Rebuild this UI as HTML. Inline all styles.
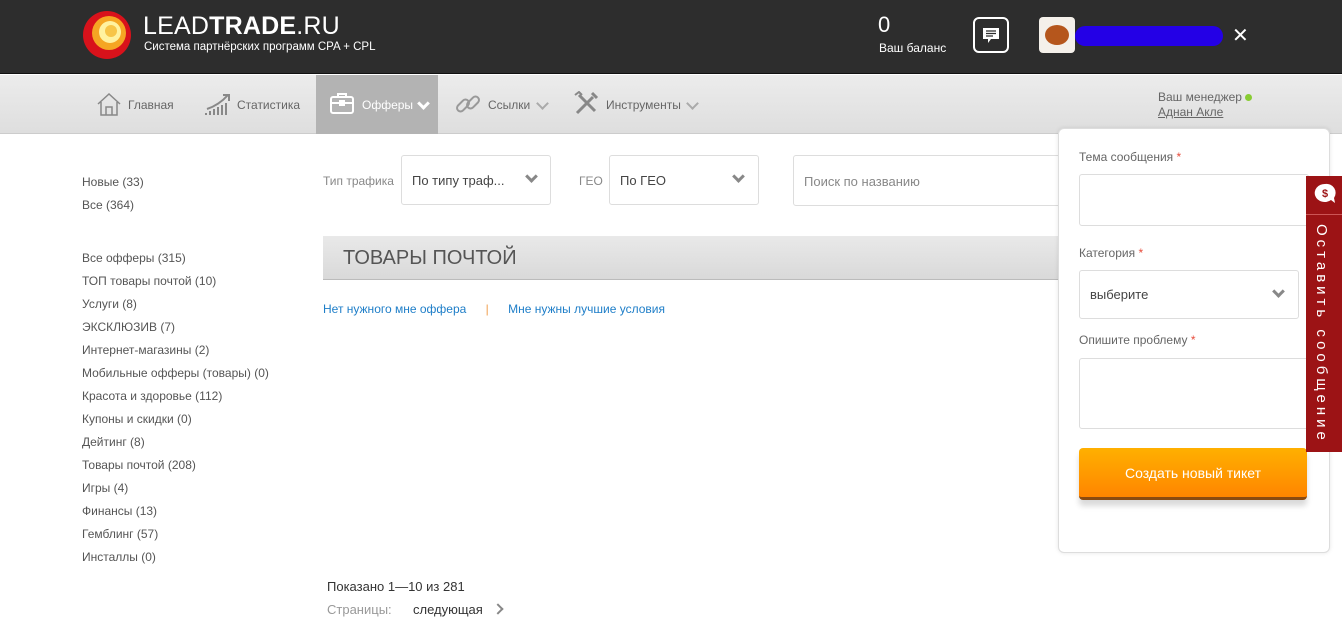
<!DOCTYPE html>
<html><head><meta charset="utf-8"><style>
*{margin:0;padding:0;box-sizing:border-box}
body{width:1342px;height:630px;overflow:hidden;background:#fff;font-family:"Liberation Sans",sans-serif;position:relative;color:#555}
.a{position:absolute;white-space:nowrap}
#hdr{position:absolute;left:0;top:0;width:1342px;height:74px;background:#2d2d2d;border-bottom:1px solid #111}
#nav{position:absolute;left:0;top:75px;width:1342px;height:59px;background:linear-gradient(#ececec,#dedede);border-bottom:1px solid #ccc}
.ni{font-size:12px;color:#666;top:98px}
.side{font-size:12px;color:#555;left:82px}
.box{position:absolute;border:1px solid #ddd;border-radius:3px;background:#fff}
.chev{position:absolute;width:9px;height:9px;border-right:3px solid #888;border-bottom:3px solid #888;transform:rotate(45deg)}
.lbl{font-size:12px;color:#666}
.req{color:#e74c3c}
</style></head><body>
<div id="hdr"></div>
<svg class="a" style="left:82px;top:10px" width="50" height="50" viewBox="0 0 50 50">
<circle cx="25" cy="25" r="24" fill="#d8121b"/><circle cx="27" cy="23" r="17" fill="#f5a623"/><circle cx="28" cy="22" r="11" fill="#fff2a0"/><circle cx="29" cy="21" r="6" fill="#f7c548"/></svg>
<div class="a" style="left:143px;top:12px;font-size:25px;color:#fff;letter-spacing:0.2px">LEAD<b>TRADE</b>.RU</div>
<div class="a" style="left:144px;top:41px;font-size:11.5px;color:#fff">Система партнёрских программ CPA + CPL</div>
<div class="a" style="left:878px;top:12px;font-size:22px;color:#fff">0</div>
<div class="a" style="left:879px;top:41px;font-size:12px;color:#fff">Ваш баланс</div>
<div class="a" style="left:973px;top:17px;width:36px;height:36px;border:2px solid #fff;border-radius:6px"></div>
<svg class="a" style="left:982px;top:27px" width="18" height="17" viewBox="0 0 18 17"><path d="M1 1h16v11H9l-3 4v-4H1z" fill="#fff"/><path d="M4 4h10M4 6.5h10M4 9h7" stroke="#2d2d2d" stroke-width="1.3"/></svg>
<div class="a" style="left:1039px;top:17px;width:36px;height:36px;background:#f4f0ea;border-radius:4px;overflow:hidden"><div style="position:absolute;left:6px;top:8px;width:24px;height:20px;background:#b5561c;border-radius:50%"></div></div>
<div class="a" style="left:1075px;top:26px;width:148px;height:20px;background:#2400e6;border-radius:10px"></div>
<div class="a" style="left:1232px;top:23px;font-size:20px;color:#fff">✕</div>

<div id="nav"></div>
<div class="a" style="left:316px;top:75px;width:122px;height:59px;background:#b3b3b3"></div>
<svg class="a" style="left:96px;top:91px" width="26" height="26" viewBox="0 0 26 26" fill="none" stroke="#888" stroke-width="1.5"><path d="M2 13L13 3l11 10M5 11v13h16V11M10 24v-8h6v8"/></svg>
<div class="a ni" style="left:128px">Главная</div>
<svg class="a" style="left:204px;top:91px" width="28" height="26" viewBox="0 0 28 26" stroke="#888" stroke-width="2" fill="none"><path d="M2 24v-2M6 24v-4M10 24v-6M14 24v-8M18 24v-10M22 24v-12M3 18Q15 14 24 4"/><path d="M19 4h6v6" /></svg>
<div class="a ni" style="left:237px">Статистика</div>
<svg class="a" style="left:330px;top:92px" width="24" height="22" viewBox="0 0 24 22" fill="none" stroke="#fff" stroke-width="2"><rect x="1" y="5" width="22" height="16" rx="2"/><path d="M8 5V2h8v3M1 11h22"/><rect x="10" y="9" width="4" height="4" fill="#fff"/></svg>
<div class="a ni" style="left:362px;color:#fff">Офферы</div>
<div class="chev" style="left:419px;top:99px;border-color:#fff"></div>
<svg class="a" style="left:455px;top:91px" width="26" height="26" viewBox="0 0 26 26" fill="none" stroke="#999" stroke-width="2"><rect x="1" y="11" width="14" height="7" rx="3.5" transform="rotate(-45 8 14.5)"/><rect x="11" y="8" width="14" height="7" rx="3.5" transform="rotate(-45 18 11.5)"/></svg>
<div class="a ni" style="left:488px">Ссылки</div>
<div class="chev" style="left:538px;top:99px;border-color:#aaa;border-width:2px"></div>
<svg class="a" style="left:573px;top:91px" width="26" height="26" viewBox="0 0 26 26" stroke="#888" stroke-width="3" fill="none"><path d="M4 22L20 6M6 4l16 16"/><path d="M2 4l4-3 3 3" stroke-width="2"/><path d="M19 2l5 5" /></svg>
<div class="a ni" style="left:606px">Инструменты</div>
<div class="chev" style="left:688px;top:99px;border-color:#aaa;border-width:2px"></div>
<div class="a" style="left:1158px;top:90px;font-size:12px;color:#666">Ваш менеджер <span style="display:inline-block;width:7px;height:7px;border-radius:50%;background:#8c3"></span></div>
<div class="a" style="left:1158px;top:105px;font-size:12px;color:#666;text-decoration:underline">Аднан Акле</div>

<div class="a side" style="top:175px">Новые (33)</div>
<div class="a side" style="top:198px">Все (364)</div>
<div class="a side" style="top:251px">Все офферы (315)</div>
<div class="a side" style="top:274px">ТОП товары почтой (10)</div>
<div class="a side" style="top:297px">Услуги (8)</div>
<div class="a side" style="top:320px">ЭКСКЛЮЗИВ (7)</div>
<div class="a side" style="top:343px">Интернет-магазины (2)</div>
<div class="a side" style="top:366px">Мобильные офферы (товары) (0)</div>
<div class="a side" style="top:389px">Красота и здоровье (112)</div>
<div class="a side" style="top:412px">Купоны и скидки (0)</div>
<div class="a side" style="top:435px">Дейтинг (8)</div>
<div class="a side" style="top:458px">Товары почтой (208)</div>
<div class="a side" style="top:481px">Игры (4)</div>
<div class="a side" style="top:504px">Финансы (13)</div>
<div class="a side" style="top:527px">Гемблинг (57)</div>
<div class="a side" style="top:550px">Инсталлы (0)</div>

<div class="a" style="left:323px;top:174px;font-size:12px;color:#888">Тип трафика</div>
<div class="box" style="left:401px;top:155px;width:150px;height:50px"></div>
<div class="a" style="left:412px;top:173px;font-size:13px;color:#444">По типу траф...</div>
<div class="chev" style="left:527px;top:172px"></div>
<div class="a" style="left:579px;top:174px;font-size:12px;color:#888">ГЕО</div>
<div class="box" style="left:609px;top:155px;width:150px;height:50px"></div>
<div class="a" style="left:620px;top:173px;font-size:13px;color:#444">По ГЕО</div>
<div class="chev" style="left:734px;top:172px"></div>
<div class="box" style="left:793px;top:155px;width:280px;height:51px"></div>
<div class="a" style="left:804px;top:174px;font-size:13px;color:#888">Поиск по названию</div>
<div class="a" style="left:323px;top:236px;width:740px;height:44px;background:linear-gradient(#e9e9e9,#d9d9d9);border-bottom:1px solid #bbb"></div>
<div class="a" style="left:343px;top:247px;font-size:20px;color:#555">ТОВАРЫ ПОЧТОЙ</div>
<div class="a" style="left:323px;top:302px;font-size:12px;color:#1e7ec8">Нет нужного мне оффера <span style="color:#f0a050;margin:0 16px">|</span> Мне нужны лучшие условия</div>
<div class="a" style="left:327px;top:579px;font-size:13px;color:#333">Показано 1—10 из 281</div>
<div class="a" style="left:327px;top:602px;font-size:13px;color:#999">Страницы:</div>
<div class="a" style="left:413px;top:602px;font-size:13px;color:#333">следующая</div>
<div class="chev" style="left:494px;top:605px;transform:rotate(-45deg);width:8px;height:8px;border-width:2px"></div>

<div class="a" style="left:1058px;top:128px;width:272px;height:425px;background:#fff;border:1px solid #ddd;border-radius:6px;box-shadow:0 0 4px rgba(0,0,0,.1)"></div>
<div class="a lbl" style="left:1079px;top:150px">Тема сообщения <span class="req">*</span></div>
<div class="box" style="left:1079px;top:174px;width:230px;height:52px"></div>
<div class="a lbl" style="left:1079px;top:246px">Категория <span class="req">*</span></div>
<div class="box" style="left:1079px;top:270px;width:220px;height:49px"></div>
<div class="a" style="left:1090px;top:287px;font-size:13px;color:#444">выберите</div>
<div class="chev" style="left:1274px;top:287px"></div>
<div class="a lbl" style="left:1079px;top:333px">Опишите проблему <span class="req">*</span></div>
<div class="box" style="left:1079px;top:358px;width:230px;height:71px"></div>
<div class="a" style="left:1079px;top:448px;width:228px;height:52px;background:linear-gradient(#ffb000,#ff8500);border-radius:4px;border-bottom:3px solid #8a4a10;box-shadow:0 6px 6px rgba(0,0,0,.15);color:#fff;font-size:14px;text-align:center;line-height:50px">Создать новый тикет</div>
<div class="a" style="left:1306px;top:176px;width:36px;height:276px;background:#9c1315"></div>
<div class="a" style="left:1306px;top:214px;width:36px;height:1px;background:#c55"></div>
<svg class="a" style="left:1313px;top:182px" width="24" height="24" viewBox="0 0 24 24"><path d="M12 2a10 9 0 1 0 6 16l4 3-1-5A9 9 0 0 0 12 2z" fill="#fff"/><text x="12" y="15" font-size="11" text-anchor="middle" fill="#9c1315" font-family="Liberation Sans" font-weight="bold">$</text></svg>
<div class="a" style="left:1313px;top:224px;font-size:15px;color:#fff;writing-mode:vertical-rl;letter-spacing:4px">Оставить сообщение</div>
</body></html>
